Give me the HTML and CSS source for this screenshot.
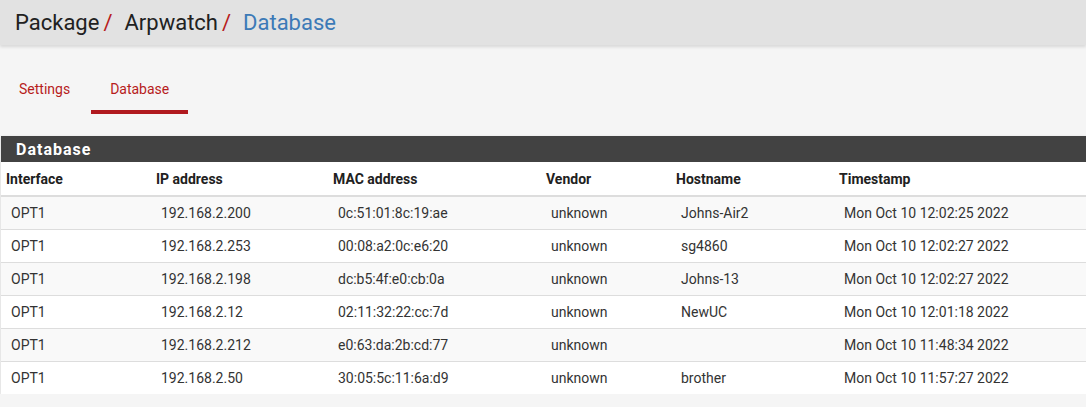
FILE: index.html
```html
<!DOCTYPE html>
<html lang="en">
<head>
  <meta charset="UTF-8" />
  <meta name="viewport" content="width=device-width, initial-scale=1.0" />
  <title>Package / Arpwatch / Database</title>
  <link rel="stylesheet" href="styles.css">
</head>
<body>
  <!-- breadcrumb bar -->
  <div class="page-header">
    <ol class="breadcrumb">
      <li>Package<span class="sep">/</span></li>
      <li>Arpwatch<span class="sep">/</span></li>
      <li class="active">Database</li>
    </ol>
  </div>

  <!-- tabs -->
  <ul class="tabs">
    <li><a href="#">Settings</a></li>
    <li class="current"><a href="#">Database</a></li>
  </ul>

  <!-- panel -->
  <div class="panel">
    <div class="panel-heading">Database</div>
    <table class="db-table">
      <colgroup>
        <col style="width: 150px" />
        <col style="width: 177px" />
        <col style="width: 213px" />
        <col style="width: 130px" />
        <col style="width: 163px" />
        <col />
      </colgroup>
      <thead>
        <tr>
          <th>Interface</th>
          <th>IP address</th>
          <th>MAC address</th>
          <th>Vendor</th>
          <th>Hostname</th>
          <th>Timestamp</th>
        </tr>
      </thead>
      <tbody>
        <tr>
          <td>OPT1</td><td>192.168.2.200</td><td>0c:51:01:8c:19:ae</td><td>unknown</td><td>Johns-Air2</td><td>Mon Oct 10 12:02:25 2022</td>
        </tr>
        <tr>
          <td>OPT1</td><td>192.168.2.253</td><td>00:08:a2:0c:e6:20</td><td>unknown</td><td>sg4860</td><td>Mon Oct 10 12:02:27 2022</td>
        </tr>
        <tr>
          <td>OPT1</td><td>192.168.2.198</td><td>dc:b5:4f:e0:cb:0a</td><td>unknown</td><td>Johns-13</td><td>Mon Oct 10 12:02:27 2022</td>
        </tr>
        <tr>
          <td>OPT1</td><td>192.168.2.12</td><td>02:11:32:22:cc:7d</td><td>unknown</td><td>NewUC</td><td>Mon Oct 10 12:01:18 2022</td>
        </tr>
        <tr>
          <td>OPT1</td><td>192.168.2.212</td><td>e0:63:da:2b:cd:77</td><td>unknown</td><td></td><td>Mon Oct 10 11:48:34 2022</td>
        </tr>
        <tr>
          <td>OPT1</td><td>192.168.2.50</td><td>30:05:5c:11:6a:d9</td><td>unknown</td><td>brother</td><td>Mon Oct 10 11:57:27 2022</td>
        </tr>
      </tbody>
    </table>
  </div>
</body>
</html>
```

FILE: styles.css
```css
body {
  font-family: Roboto, "Liberation Sans", sans-serif;
  margin: 0;
  background: #f5f5f5;
  color: #333333;
  overflow: hidden;
}

.page-header {
  height: 45px;
  background: #e2e2e2;
  box-shadow: 0 2px 3px rgba(0, 0, 0, 0.12);
  position: relative;
}

.breadcrumb {
  margin: 0;
  padding: 10px 0 0 15px;
  list-style: none;
  display: flex;
  font-size: 22px;
  line-height: 26px;
  color: #212121;
}

.breadcrumb .sep {
  color: #b71c1c;
  padding: 0 12px 0 4px;
}

.breadcrumb .active {
  color: #3c7ab7;
}

.tabs {
  list-style: none;
  margin: 19px 0 0;
  padding: 0;
  display: flex;
  gap: 2px;
}

.tabs a {
  display: block;
  padding: 15px 19px 11px;
  font-size: 14px;
  line-height: 20px;
  color: #b71c1c;
  text-decoration: none;
  border-bottom: 4px solid transparent;
}

.tabs .current a {
  border-bottom-color: #b0191e;
}

.panel {
  margin: 22px 0 0 1px;
  width: 1100px;
  background: #ffffff;
  box-shadow: 0 1px 3px rgba(0, 0, 0, 0.15);
}

.panel-heading {
  height: 26px;
  line-height: 28px;
  padding-left: 15px;
  background: #424242;
  color: #ffffff;
  font-size: 16px;
  font-weight: 700;
  letter-spacing: 1px;
}

.db-table {
  width: 100%;
  border-collapse: collapse;
  table-layout: fixed;
  font-size: 14px;
}

.db-table th {
  text-align: left;
  font-weight: 700;
  color: #212121;
  height: 33px;
  padding: 0 5px;
  border-bottom: 2px solid #dddddd;
}

.db-table td {
  height: 32px;
  padding: 0 5px 0 10px;
  border-top: 1px solid #dddddd;
  white-space: nowrap;
}

.db-table tbody tr:nth-child(odd) {
  background: #f9f9f9;
}
```
